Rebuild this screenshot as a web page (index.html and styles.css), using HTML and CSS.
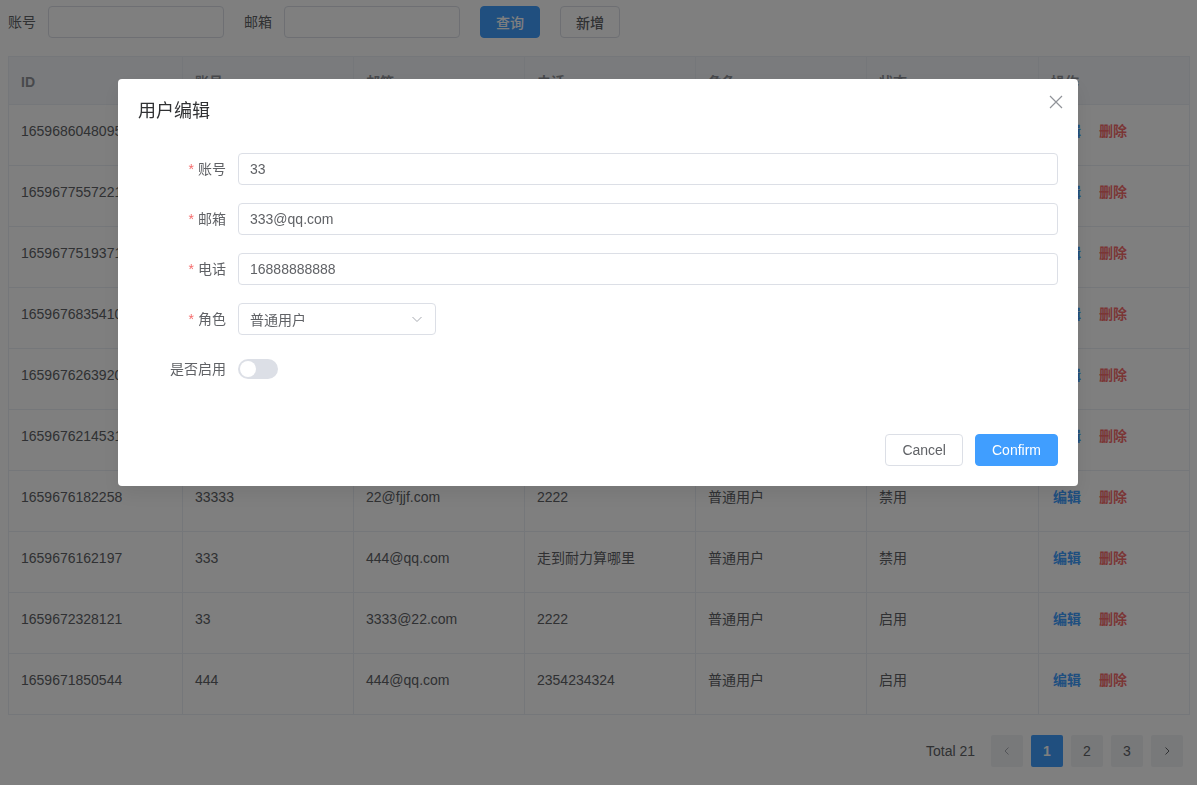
FILE: index.html
```html
<!DOCTYPE html>
<html lang="zh-CN">
<head>
    <meta charset="UTF-8">
    <title>用户管理</title>
    <link rel="stylesheet" href="styles.css">
</head>
<body>
<div class="page">
    <!-- 검색 영역 -->
    <form class="search">
        <div class="search-item">
            <span class="search-label">账号</span>
            <input class="search-input" type="text">
        </div>
        <div class="search-item">
            <span class="search-label">邮箱</span>
            <input class="search-input" type="text">
        </div>
        <button type="button" class="btn btn-primary">查询</button>
        <button type="button" class="btn">新增</button>
    </form>

    <table class="grid">
        <colgroup>
            <col class="col-id"><col class="col-acc"><col class="col-mail"><col class="col-tel">
            <col class="col-role"><col class="col-state"><col class="col-op">
        </colgroup>
        <thead>
            <tr><th>ID</th><th>账号</th><th>邮箱</th><th>电话</th><th>角色</th><th>状态</th><th>操作</th></tr>
        </thead>
        <tbody>
            <tr><td>1659686048095</td><td>33</td><td>333@qq.com</td><td>16888888888</td><td>普通用户</td><td>禁用</td><td class="op"><a class="lnk lnk-edit">编辑</a><a class="lnk lnk-del">删除</a></td></tr>
            <tr><td>1659677557221</td><td>5555</td><td>555@qq.com</td><td>13333333333</td><td>普通用户</td><td>启用</td><td class="op"><a class="lnk lnk-edit">编辑</a><a class="lnk lnk-del">删除</a></td></tr>
            <tr><td>1659677519371</td><td>666</td><td>666@qq.com</td><td>2222</td><td>普通用户</td><td>启用</td><td class="op"><a class="lnk lnk-edit">编辑</a><a class="lnk lnk-del">删除</a></td></tr>
            <tr><td>1659676835410</td><td>222</td><td>222@qq.com</td><td>2222</td><td>普通用户</td><td>禁用</td><td class="op"><a class="lnk lnk-edit">编辑</a><a class="lnk lnk-del">删除</a></td></tr>
            <tr><td>1659676263920</td><td>111</td><td>111@qq.com</td><td>1111</td><td>普通用户</td><td>启用</td><td class="op"><a class="lnk lnk-edit">编辑</a><a class="lnk lnk-del">删除</a></td></tr>
            <tr><td>1659676214531</td><td>3333</td><td>33@qq.com</td><td>3333</td><td>普通用户</td><td>禁用</td><td class="op"><a class="lnk lnk-edit">编辑</a><a class="lnk lnk-del">删除</a></td></tr>
            <tr><td>1659676182258</td><td>33333</td><td>22@fjjf.com</td><td>2222</td><td>普通用户</td><td>禁用</td><td class="op"><a class="lnk lnk-edit">编辑</a><a class="lnk lnk-del">删除</a></td></tr>
            <tr><td>1659676162197</td><td>333</td><td>444@qq.com</td><td>走到耐力算哪里</td><td>普通用户</td><td>禁用</td><td class="op"><a class="lnk lnk-edit">编辑</a><a class="lnk lnk-del">删除</a></td></tr>
            <tr><td>1659672328121</td><td>33</td><td>3333@22.com</td><td>2222</td><td>普通用户</td><td>启用</td><td class="op"><a class="lnk lnk-edit">编辑</a><a class="lnk lnk-del">删除</a></td></tr>
            <tr><td>1659671850544</td><td>444</td><td>444@qq.com</td><td>2354234324</td><td>普通用户</td><td>启用</td><td class="op"><a class="lnk lnk-edit">编辑</a><a class="lnk lnk-del">删除</a></td></tr>
        </tbody>
    </table>

    <div class="pager">
        <span class="pager-total">Total 21</span>
        <button class="pg pg-off"><svg viewBox="0 0 12 12" width="12" height="12"><path d="M7.5 2.5 4 6l3.5 3.5" fill="none" stroke="currentColor" stroke-width="1"/></svg></button>
        <button class="pg pg-on">1</button>
        <button class="pg">2</button>
        <button class="pg">3</button>
        <button class="pg"><svg viewBox="0 0 12 12" width="12" height="12"><path d="M4.5 2.5 8 6l-3.5 3.5" fill="none" stroke="currentColor" stroke-width="1"/></svg></button>
    </div>
</div>

<!-- 모달 -->
<div class="mask">
    <div class="dialog">
        <div class="dialog-head">
            <span class="dialog-title">用户编辑</span>
            <svg class="dialog-close" viewBox="0 0 14 14" width="14" height="14"><path d="M1 1l12 12M13 1 1 13" stroke="currentColor" stroke-width="1.2" fill="none"/></svg>
        </div>
        <div class="dialog-body">
            <div class="form-item">
                <label class="form-label"><i class="req">*</i>账号</label>
                <input class="form-input" type="text" value="33">
            </div>
            <div class="form-item">
                <label class="form-label"><i class="req">*</i>邮箱</label>
                <input class="form-input" type="text" value="333@qq.com">
            </div>
            <div class="form-item">
                <label class="form-label"><i class="req">*</i>电话</label>
                <input class="form-input" type="text" value="16888888888">
            </div>
            <div class="form-item">
                <label class="form-label"><i class="req">*</i>角色</label>
                <div class="select">
                    <span>普通用户</span>
                    <svg viewBox="0 0 14 14" width="14" height="14"><path d="M2.5 5 7 9.5 11.5 5" fill="none" stroke="currentColor" stroke-width="1"/></svg>
                </div>
            </div>
            <div class="form-item">
                <label class="form-label">是否启用</label>
                <div class="switch-wrap"><span class="switch"><span class="switch-knob"></span></span></div>
            </div>
        </div>
        <div class="dialog-foot">
            <button type="button" class="btn">Cancel</button>
            <button type="button" class="btn btn-primary">Confirm</button>
        </div>
    </div>
</div>
</body>
</html>
```

FILE: styles.css
```css
* {
    box-sizing: border-box;
}

body {
    margin: 0;
    font-family: "Liberation Sans", "Noto Sans CJK SC", sans-serif;
    font-size: 14px;
    color: #606266;
    background: #fff;
}

.page {
    padding: 6px 8px;
}

/* 검색 */
.search {
    display: flex;
    align-items: center;
    gap: 20px;
    margin: 0 0 18px;
}
.search-item {
    display: flex;
    align-items: center;
}
.search-label {
    padding-right: 12px;
    line-height: 32px;
    color: #606266;
}
.search-input {
    width: 176px;
    height: 32px;
    border: 1px solid #dcdfe6;
    border-radius: 4px;
    padding: 0 11px;
    font: inherit;
    outline: none;
}

.btn {
    height: 32px;
    padding: 0 15px;
    border: 1px solid #dcdfe6;
    border-radius: 4px;
    background: #fff;
    color: #606266;
    font: inherit;
    font-weight: 500;
    cursor: pointer;
}
.btn-primary {
    background: #409eff;
    border-color: #409eff;
    color: #fff;
}

/* 표 */
.grid {
    width: 1181px;
    border-collapse: collapse;
    table-layout: fixed;
    border: 1px solid #ebeef5;
}
.col-id { width: 174px; }
.col-acc, .col-mail, .col-tel, .col-role { width: 171px; }
.col-state { width: 172px; }
.col-op { width: 151px; }

.grid th,
.grid td {
    border: 1px solid #ebeef5;
    text-align: left;
    vertical-align: top;
    line-height: 23px;
    padding: 0 12px;
    white-space: nowrap;
    overflow: hidden;
}
.grid th {
    height: 48px;
    padding-top: 14px;
    background: #f5f7fa;
    color: #909399;
    font-weight: bold;
}
.grid td {
    height: 61px;
    padding-top: 15px;
    color: #606266;
}
.grid td.op {
    padding-left: 14px;
}
.lnk {
    font-weight: bold;
    margin-right: 18px;
    cursor: pointer;
}
.lnk-edit { color: #409eff; }
.lnk-del { color: #f56c6c; }

/* 페이지 */
.pager {
    display: flex;
    justify-content: flex-end;
    align-items: center;
    margin-top: 20px;
    padding-right: 2px;
}
.pager-total {
    margin-right: 12px;
    color: #606266;
}
.pg {
    width: 32px;
    height: 32px;
    margin: 0 4px;
    border: 0;
    border-radius: 2px;
    background: #f0f2f5;
    color: #606266;
    font: inherit;
    display: flex;
    align-items: center;
    justify-content: center;
}
.pg-on {
    background: #409eff;
    color: #fff;
    font-weight: bold;
}
.pg-off {
    color: #a8abb2;
}

/* 모달 */
.mask {
    position: fixed;
    top: 0;
    left: 0;
    right: 0;
    bottom: 0;
    background: rgba(0, 0, 0, 0.5);
}
.dialog {
    position: relative;
    width: 960px;
    margin: 79px 0 0 118px;
    background: #fff;
    border-radius: 4px;
    box-shadow: 0 8px 20px rgba(0, 0, 0, 0.08);
}
.dialog-head {
    padding: 20px 20px 10px;
}
.dialog-title {
    display: block;
    font-size: 18px;
    line-height: 24px;
    color: #303133;
}
.dialog-close {
    position: absolute;
    top: 16px;
    right: 15px;
    color: #909399;
}
.dialog-body {
    padding: 20px 20px 31px;
}
.form-item {
    display: flex;
    margin-bottom: 18px;
}
.form-label {
    width: 100px;
    flex: none;
    padding-right: 12px;
    line-height: 32px;
    text-align: right;
    color: #606266;
}
.req {
    font-style: normal;
    color: #f56c6c;
    margin-right: 4px;
}
.form-input {
    flex: 1;
    height: 32px;
    border: 1px solid #dcdfe6;
    border-radius: 4px;
    padding: 0 11px;
    font: inherit;
    color: #606266;
    outline: none;
}
.select {
    width: 198px;
    height: 32px;
    border: 1px solid #dcdfe6;
    border-radius: 4px;
    padding: 0 11px;
    display: flex;
    align-items: center;
    justify-content: space-between;
    color: #606266;
}
.select svg {
    color: #a8abb2;
}
.switch-wrap {
    height: 32px;
    display: flex;
    align-items: center;
}
.switch {
    display: flex;
    width: 40px;
    height: 20px;
    padding: 2px;
    border-radius: 10px;
    background: #dcdfe6;
}
.switch-knob {
    width: 16px;
    height: 16px;
    border-radius: 50%;
    background: #fff;
}
.dialog-foot {
    display: flex;
    justify-content: flex-end;
    gap: 12px;
    padding: 0 20px 20px;
}
.dialog-foot .btn {
    padding: 0 16px;
}
```
